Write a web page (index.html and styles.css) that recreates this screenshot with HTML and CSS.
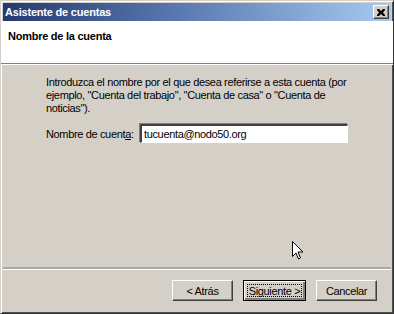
FILE: index.html
```html
<!DOCTYPE html>
<html>
<head>
<meta charset="utf-8">
<link rel="stylesheet" href="styles.css">
</head>
<body>
<div class="window">
  <div class="titlebar">
    <span class="title">Asistente de cuentas</span>
    <span class="close"><svg width="8" height="7" viewBox="0 0 8 7"><path d="M0 0h2l2 2 2-2h2v1L6 3.5 8 6v1H6L4 5 2 7H0V6l2-2.5L0 1z" fill="#000"/></svg></span>
  </div>
  <div class="header">Nombre de la cuenta</div>
  <div class="content">
    <p class="intro">Introduzca el nombre por el que desea referirse a esta cuenta (por ejemplo, "Cuenta del trabajo", "Cuenta de casa" o "Cuenta de noticias").</p>
    <div class="field">
      <label class="label" for="acc">Nombre de cuent<u>a</u>:</label>
      <input class="input" id="acc" type="text" value="tucuenta@nodo50.org">
    </div>
  </div>
  <div class="footer">
    <button class="btn">&lt; Atrás</button>
    <button class="btn btn-default">Siguiente &gt;</button>
    <button class="btn btn-cancel">Cancelar</button>
  </div>
  <svg class="cursor" width="12" height="20" viewBox="0 0 12 20"><path d="M0.5 0.5v15l3.5-3.5 2.5 6 2-1-2.5-6h5z" fill="#fff" stroke="#000" stroke-width="1"/></svg>
</div>
</body>
</html>
```
FILE: styles.css
```css
html, body {
  margin: 0;
  padding: 0;
  background: #d4d0c8;
}
body {
  width: 394px;
  height: 314px;
  overflow: hidden;
  font-family: "Liberation Sans", Arial, sans-serif;
  font-size: 11px;
  letter-spacing: -0.35px;
  color: #000;
}
.window {
  position: relative;
  box-sizing: border-box;
  width: 394px;
  height: 314px;
  display: flex;
  flex-direction: column;
  background: #d4d0c8;
  border-left: 1px solid #d4d0c8;
  border-top: 1px solid #d4d0c8;
  border-right: 1px solid #303030;
  border-bottom: 1px solid #303030;
  box-shadow: inset 1px 1px 0 #fff, inset -1px -1px 0 #505050;
  padding: 2px;
}
.titlebar {
  height: 18px;
  display: flex;
  align-items: center;
  justify-content: space-between;
  background: linear-gradient(to right, #233a70 0%, #5a78b0 45%, #a6caf0 100%);
  padding: 0 2px 0 2px;
}
.title {
  color: #fff;
  font-weight: bold;
  font-size: 11px;
  letter-spacing: -0.2px;
}
.close {
  box-sizing: border-box;
  width: 16px;
  height: 14px;
  background: #d4d0c8;
  border-top: 1px solid #fff;
  border-left: 1px solid #fff;
  border-right: 1px solid #404040;
  border-bottom: 1px solid #404040;
  box-shadow: inset -1px -1px 0 #808080;
  display: flex;
  align-items: center;
  justify-content: center;
}
.header {
  height: 43px;
  background: #fff;
  font-weight: bold;
  letter-spacing: -0.25px;
  box-sizing: border-box;
  border-bottom: 1px solid #808080;
  box-shadow: 0 1px 0 #fff;
  margin: 0 -2px;
  padding: 9px 0 0 7px;
}
.content {
  flex: 1;
  padding: 12px 20px 0 43px;
}
.intro {
  margin: 0;
  line-height: 13px;
}
.field {
  display: flex;
  align-items: center;
  margin-top: 9px;
}
.label {
  width: 94px;
}
.label u {
  text-decoration: underline;
}
.input {
  box-sizing: border-box;
  width: 208px;
  height: 19px;
  margin: 0;
  padding: 1px 2px;
  font: inherit;
  letter-spacing: inherit;
  background: #fff;
  border-top: 2px solid #404040;
  border-left: 2px solid #404040;
  border-right: 1px solid #fff;
  border-bottom: 1px solid #fff;
  box-shadow: -1px -1px 0 #808080, 1px 1px 0 #d4d0c8;
  outline: none;
}
.footer {
  height: 44px;
  box-sizing: border-box;
  border-top: 2px solid #a8a8a8;
  box-shadow: inset 0 1px 0 #fff;
  display: flex;
  justify-content: flex-end;
  align-items: flex-start;
  gap: 10px;
  padding: 11px 14px 0 0;
  margin-top: -1px;
}
.btn {
  box-sizing: border-box;
  width: 61px;
  height: 21px;
  margin: 0;
  padding: 0;
  font: inherit;
  letter-spacing: inherit;
  color: #000;
  background: #d4d0c8;
  border-top: 1px solid #fff;
  border-left: 1px solid #fff;
  border-right: 1px solid #404040;
  border-bottom: 1px solid #404040;
  box-shadow: inset -1px -1px 0 #808080;
}
.btn-default {
  width: 63px;
  border: 1px solid #000;
  box-shadow: inset 1px 1px 0 #fff, inset -2px -2px 0 #808080;
  outline: 1px dotted #000;
  outline-offset: -5px;
}
.cursor {
  position: absolute;
  left: 291px;
  top: 240px;
}
```
